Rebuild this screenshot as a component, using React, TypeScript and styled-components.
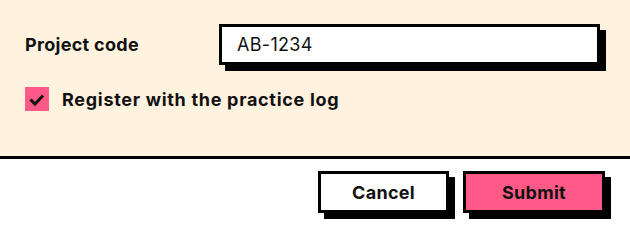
import React, { useState } from 'react';
import styled, { createGlobalStyle } from 'styled-components';

const GlobalStyle = createGlobalStyle`
  html, body {
    margin: 0;
    padding: 0;
    background: #ffffff;
  }
  body {
    font-family: Inter, "Liberation Sans", sans-serif;
    color: #111111;
  }
`;

const Dialog = styled.div`
  width: 630px;
  display: flex;
  flex-direction: column;
`;

const Panel = styled.div`
  background: #fff2df;
  border-bottom: 3px solid #000;
  padding: 24px 24px 45px 25px;
  display: flex;
  flex-direction: column;
  gap: 22px;
`;

const FieldRow = styled.div`
  display: grid;
  grid-template-columns: 194px 1fr;
  align-items: center;
`;

const Label = styled.label`
  font-size: 18px;
  font-weight: 700;
  letter-spacing: 0.3px;
`;

const InputWrap = styled.div`
  margin-right: 6px;
`;

const Input = styled.input`
  box-sizing: border-box;
  display: block;
  width: 100%;
  height: 41px;
  border: 3px solid #000;
  background: #fff;
  box-shadow: 6px 6px 0 #000;
  padding: 0 15px;
  font-family: Inter, "Liberation Sans", sans-serif;
  font-size: 18px;
  letter-spacing: 0.3px;
  color: #111;
  outline: none;
`;

const CheckRow = styled.label`
  display: flex;
  align-items: center;
  gap: 13px;
  font-size: 18px;
  font-weight: 700;
  letter-spacing: 0.7px;
  cursor: pointer;
`;

const Box = styled.span<{ checked: boolean }>`
  width: 24px;
  height: 24px;
  flex: none;
  background: ${(p) => (p.checked ? '#ff5a87' : '#fff')};
  display: flex;
  align-items: center;
  justify-content: center;
`;

const Footer = styled.div`
  display: flex;
  justify-content: flex-end;
  gap: 14px;
  padding: 12px 25px 19px 0;
`;

const Button = styled.button<{ primary?: boolean; w: number }>`
  box-sizing: border-box;
  width: ${(p) => p.w}px;
  height: 42px;
  padding: 0;
  border: 3px solid #000;
  background: ${(p) => (p.primary ? '#ff5a87' : '#fff')};
  box-shadow: 6px 6px 0 #000;
  font-family: Inter, "Liberation Sans", sans-serif;
  font-size: 18px;
  font-weight: 700;
  letter-spacing: 0.3px;
  color: #111;
  cursor: pointer;
`;

export default function App() {
  const [code, setCode] = useState('AB-1234');
  const [checked, setChecked] = useState(true);

  return (
    <>
      <GlobalStyle />
      <Dialog>
        <Panel>
          <FieldRow>
            <Label htmlFor="code">Project code</Label>
            <InputWrap>
              <Input id="code" value={code} onChange={(e) => setCode(e.target.value)} />
            </InputWrap>
          </FieldRow>
          <CheckRow onClick={() => setChecked(!checked)}>
            <Box checked={checked}>
              {checked && (
                <svg width="24" height="24" viewBox="0 0 24 24">
                  <polyline points="5.5,12.5 10,17 18,8.5" fill="none" stroke="#111" strokeWidth="3" />
                </svg>
              )}
            </Box>
            Register with the practice log
          </CheckRow>
        </Panel>
        <Footer>
          <Button w={131}>Cancel</Button>
          <Button primary w={142}>Submit</Button>
        </Footer>
      </Dialog>
    </>
  );
}
